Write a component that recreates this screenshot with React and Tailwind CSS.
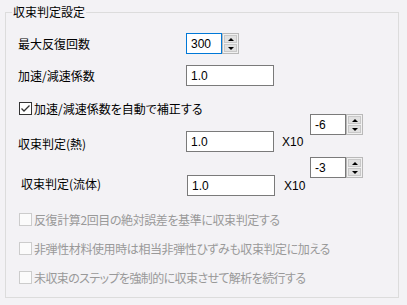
import React from "react";

function Spin({ value, focused }) {
  return (
    <div className="flex h-[21px]">
      <div
        className={
          "w-[36px] h-[21px] bg-white border flex items-center pl-[4px] text-[12px] text-black font-['Liberation_Sans',sans-serif] " +
          (focused ? "border-[#0078d7]" : "border-[#7a7a7a]")
        }
      >
        {value}
      </div>
      <div className="w-[17px] h-[21px] border border-[#b9b9b9] bg-[#f0f0f0] flex flex-col p-[1px] gap-[1px]">
        <div className="flex-1 bg-[#e1e1e1] border border-[#c8c8c8] flex items-center justify-center">
          <div className="w-0 h-0 border-l-[3px] border-r-[3px] border-b-[3px] border-l-transparent border-r-transparent border-b-black" />
        </div>
        <div className="flex-1 bg-[#e1e1e1] border border-[#c8c8c8] flex items-center justify-center">
          <div className="w-0 h-0 border-l-[3px] border-r-[3px] border-t-[3px] border-l-transparent border-r-transparent border-t-black" />
        </div>
      </div>
    </div>
  );
}

function TextBox({ value }) {
  return (
    <div className="w-[88px] h-[21px] bg-white border border-[#7a7a7a] flex items-center pl-[4px] text-[12px] text-black font-['Liberation_Sans',sans-serif]">
      {value}
    </div>
  );
}

function Check({ checked, disabled }) {
  return (
    <div
      className={
        "w-[13px] h-[13px] shrink-0 border flex items-center justify-center " +
        (disabled ? "border-[#cccccc] bg-[#fbfbfb]" : "border-[#333333] bg-white")
      }
    >
      {checked && (
        <svg width="11" height="11" viewBox="0 0 11 11">
          <path d="M1.5 5.5 L4 8 L9.5 2.5" stroke="#333" strokeWidth="1.3" fill="none" />
        </svg>
      )}
    </div>
  );
}

export default function App() {
  return (
    <div className="w-[407px] h-[305px] bg-[#f3f2f5] pt-[12px] pl-[5px] text-[12px] text-black leading-[14px] font-['Noto_Sans_CJK_JP','Liberation_Sans',sans-serif] [font-feature-settings:'palt']">
      <div className="relative w-[394px] h-[286px] border border-[#dcdcdc] pl-[12px]">
        <div className="absolute -top-[8px] left-[6px] px-[1px] bg-[#f3f2f5] leading-[14px]">収束判定設定</div>

        <div className="mt-[20px] h-[21px] flex items-center">
          <div className="w-[168px]">最大反復回数</div>
          <Spin value="300" focused />
        </div>

        <div className="mt-[11px] h-[21px] flex items-center">
          <div className="w-[168px]">加速/減速係数</div>
          <TextBox value="1.0" />
        </div>

        <div className="mt-[16px] h-[13px] flex items-center pl-[1px] gap-[2px]">
          <Check checked />
          <span>加速/減速係数を自動で補正する</span>
        </div>

        <div className="-mt-[1px] h-[37px] flex items-start">
          <div className="w-[168px] mt-[23px]">収束判定(熱)</div>
          <div className="mt-[17px]">
            <TextBox value="1.0" />
          </div>
          <div className="ml-[8px] w-[28px] mt-[21px] font-['Liberation_Sans',sans-serif]">X10</div>
          <Spin value="-6" />
        </div>

        <div className="mt-[6px] h-[38px] flex items-start">
          <div className="w-[169px] pl-[3px] mt-[20px]">収束判定(流体)</div>
          <div className="mt-[18px]">
            <TextBox value="1.0" />
          </div>
          <div className="ml-[9px] w-[26px] mt-[22px] font-['Liberation_Sans',sans-serif]">X10</div>
          <Spin value="-3" />
        </div>

        <div className="mt-[18px] h-[13px] flex items-center pl-[1px] gap-[2px] text-[#999999] tracking-[-0.4px]">
          <Check disabled />
          <span>反復計算2回目の絶対誤差を基準に収束判定する</span>
        </div>
        <div className="mt-[16px] h-[13px] flex items-center pl-[1px] gap-[2px] text-[#999999] tracking-[-0.4px]">
          <Check disabled />
          <span>非弾性材料使用時は相当非弾性ひずみも収束判定に加える</span>
        </div>
        <div className="mt-[16px] h-[13px] flex items-center pl-[1px] gap-[2px] text-[#999999] tracking-[-0.6px]">
          <Check disabled />
          <span>未収束のステップを強制的に収束させて解析を続行する</span>
        </div>
      </div>
    </div>
  );
}
